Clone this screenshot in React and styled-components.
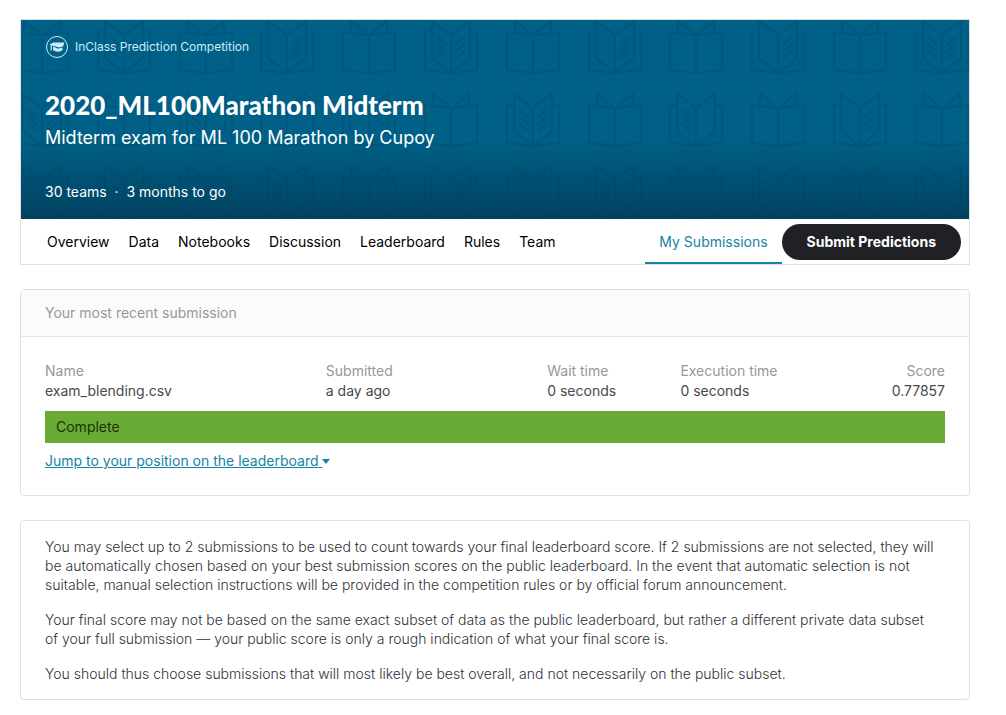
import React from "react";
import styled, { createGlobalStyle } from "styled-components";

const Global = createGlobalStyle`
  * { box-sizing: border-box; }
  body { margin: 0; background: #fff; color: #47494d; font: 14px/20px Inter, "Liberation Sans", sans-serif; }
`;

const Page = styled.main`
  display: flex;
  flex-direction: column;
  gap: 24px;
  padding: 19px 36px 15px 20px;
`;

const Competition = styled.header`
  border: 1px solid #dedfe0;
`;

const Hero = styled.div`
  position: relative;
  overflow: hidden;
  background: #006087;
  color: #fff;
  padding: 15px 24px 17px;
`;

const Backdrop = styled.svg`
  position: absolute;
  inset: 0;
  width: 100%;
  height: 100%;
`;

const HeroContent = styled.div`
  position: relative;
  display: flex;
  flex-direction: column;
`;

const Kind = styled.div`
  display: flex;
  align-items: center;
  gap: 6px;
  height: 24px;
  font-size: 12px;
  color: #c9edfb;
`;

const Title = styled.h1`
  margin: 30px 0 0;
  font: 900 26px/32px Lato, sans-serif;
`;

const Subtitle = styled.p`
  margin: 5px 0 0;
  font-size: 18px;
  line-height: 24px;
`;

const Stats = styled.p`
  margin: 32px 0 0;
`;

const TabBar = styled.div`
  display: flex;
  align-items: stretch;
  padding: 0 8px 0 16px;
`;

const Tabs = styled.nav`
  display: flex;
  flex: 1;
  gap: 19px;
  padding-left: 10px;
`;

const Tab = styled.a`
  display: flex;
  align-items: center;
  color: #000;
  text-decoration: none;
`;

const ActiveTab = styled(Tab)`
  padding: 2px 14px 0;
  color: #1684a4;
  border-bottom: 2px solid #1684a4;
`;

const SubmitButton = styled.button`
  height: 36px;
  margin: 5px 0 4px;
  padding: 0 25px;
  border: 0;
  border-radius: 18px;
  background: #202124;
  color: #fff;
  font: 700 14px/20px Inter, sans-serif;
`;

const Card = styled.section`
  overflow: hidden;
  border: 1px solid #dedfe0;
  border-radius: 4px;
`;

const CardTitle = styled.h2`
  margin: 0;
  padding: 13px 24px;
  border-bottom: 1px solid #e6e6e6;
  background: #fbfbfb;
  color: #97989a;
  font-size: 14px;
  font-weight: 400;
`;

const CardBody = styled.div`
  padding: 24px;
`;

const Table = styled.table`
  width: 100%;
  border-collapse: collapse;
  table-layout: fixed;
`;

const Column = styled.col`
  width: ${(p) => p.$width};
`;

const Cell = styled.td`
  padding: 0;
  font-weight: 400;
  text-align: ${(p) => (p.$end ? "right" : "left")};
`;

const HeadCell = styled(Cell)`
  color: #97989a;
`;

const Status = styled.div`
  margin: 10px 0 8px;
  padding: 6px 11px;
  background: #69ab35;
  color: #1c3208;
`;

const JumpLink = styled.a`
  color: #1684a4;
  text-decoration: underline;
`;

const Caret = styled.svg`
  width: 8px;
  height: 5px;
  vertical-align: 2px;
`;

const Notes = styled(Card)`
  display: flex;
  flex-direction: column;
  gap: 16px;
  padding: 16px 24px;
  color: #303236;
  font-weight: 300;
`;

const Note = styled.p`
  margin: 0;
  line-height: 19px;
`;

const BOOK_ROWS = [
  ["plain", "both", "plain", "right", "plain", "both", "plain", "right", "plain", "right", "plain", "both"],
  ["both", "plain", "left", "plain", "right", "plain", "both", "plain", "left", "plain", "right", "plain"],
  ["plain", "both", "plain", "left", "plain", "right", "plain", "both", "plain", "left", "plain", "right"],
];

const rightLines = "M5 24l9-7M5 31l9-7M5 38l9-7";
const leftLines = "M-5 24l-9-7M-5 31l-9-7M-5 38l-9-7";

function Book({ kind, x, y }) {
  return (
    <g transform={`translate(${x} ${y})`}>
      {kind === "plain" ? (
        <path d="M0 15L-26 12V50L0 53L26 50V12ZM0 15V53M0 15L-18 1V12M0 15L18 1V12" />
      ) : (
        <>
          <path d="M-19 12H-26V50L0 53L26 50V12H19M0 15L-19 1V38L0 53L19 38V1ZM0 15V53" />
          {kind !== "left" && <path d={rightLines} />}
          {kind !== "right" && <path d={leftLines} />}
        </>
      )}
    </g>
  );
}

function Books() {
  return (
    <Backdrop aria-hidden="true">
      <defs>
        <linearGradient id="shade" x1="0" y1="0" x2="0" y2="1">
          <stop offset="0.6" stopColor="#003a55" stopOpacity="0" />
          <stop offset="1" stopColor="#003a55" stopOpacity="0.8" />
        </linearGradient>
      </defs>
      <g fill="none" stroke="#00496d" strokeOpacity="0.32" strokeWidth="2">
        {BOOK_ROWS.map((row, r) =>
          row.map((kind, c) => (
            <Book key={`${r}-${c}`} kind={kind} x={Math.round(21 + c * 81.8)} y={Math.round(r * 72.5)} />
          ))
        )}
      </g>
      <rect width="100%" height="100%" fill="url(#shade)" />
    </Backdrop>
  );
}

function ClassIcon() {
  return (
    <svg width="24" height="24" viewBox="0 0 24 24" fill="#c9edfb" aria-hidden="true">
      <circle cx="12" cy="12" r="10.5" fill="none" stroke="#c9edfb" />
      <path d="M4.500 9.500L8.500 7.500H19.500L18 11.500L14 12.500L7.500 10.800Z" />
      <path d="M8 11.500l5 2.300 4.500-1.300v2.500c-2 2.300-7 2.300-9.500 0z" />
      <path d="M6.200 9.500v6" stroke="#c9edfb" strokeWidth="1.200" />
    </svg>
  );
}

const TABS = ["Overview", "Data", "Notebooks", "Discussion", "Leaderboard", "Rules", "Team"];

export default function App() {
  return (
    <>
      <Global />
      <Page>
        <Competition>
          <Hero>
            <Books />
            <HeroContent>
              <Kind><ClassIcon />InClass Prediction Competition</Kind>
              <Title>2020_ML100Marathon Midterm</Title>
              <Subtitle>Midterm exam for ML 100 Marathon by Cupoy</Subtitle>
              <Stats>30 teams&nbsp; · &nbsp;3 months to go</Stats>
            </HeroContent>
          </Hero>
          <TabBar>
            <Tabs>{TABS.map((t) => <Tab key={t} href="#">{t}</Tab>)}</Tabs>
            <ActiveTab href="#" aria-current="page">My Submissions</ActiveTab>
            <SubmitButton type="button">Submit Predictions</SubmitButton>
          </TabBar>
        </Competition>

        <Card>
          <CardTitle>Your most recent submission</CardTitle>
          <CardBody>
            <Table>
              <colgroup>
                <Column $width="31.2%" />
                <Column $width="24.6%" />
                <Column $width="14.8%" />
                <Column $width="18%" />
                <Column />
              </colgroup>
              <thead>
                <tr>
                  <HeadCell as="th" scope="col">Name</HeadCell>
                  <HeadCell as="th" scope="col">Submitted</HeadCell>
                  <HeadCell as="th" scope="col">Wait time</HeadCell>
                  <HeadCell as="th" scope="col">Execution time</HeadCell>
                  <HeadCell as="th" scope="col" $end>Score</HeadCell>
                </tr>
              </thead>
              <tbody>
                <tr>
                  <Cell>exam_blending.csv</Cell>
                  <Cell>a day ago</Cell>
                  <Cell>0 seconds</Cell>
                  <Cell>0 seconds</Cell>
                  <Cell $end>0.77857</Cell>
                </tr>
              </tbody>
            </Table>
            <Status>Complete</Status>
            <JumpLink href="#">
              Jump to your position on the leaderboard{" "}
              <Caret viewBox="0 0 8 5" aria-hidden="true"><path d="M0 0h8L4 5z" fill="#1684a4" /></Caret>
            </JumpLink>
          </CardBody>
        </Card>

        <Notes>
          <Note>
            You may select up to 2 submissions to be used to count towards your final leaderboard score. If 2
            submissions are not selected, they will be automatically chosen based on your best submission scores
            on the public leaderboard. In the event that automatic selection is not suitable, manual selection
            instructions will be provided in the competition rules or by official forum announcement.
          </Note>
          <Note>
            Your final score may not be based on the same exact subset of data as the public leaderboard, but
            rather a different private data subset of&nbsp;your full submission — your public score is only a rough
            indication of what your final score is.
          </Note>
          <Note>
            You should thus choose submissions that will most likely be best overall, and not necessarily on the
            public subset.
          </Note>
        </Notes>
      </Page>
    </>
  );
}
